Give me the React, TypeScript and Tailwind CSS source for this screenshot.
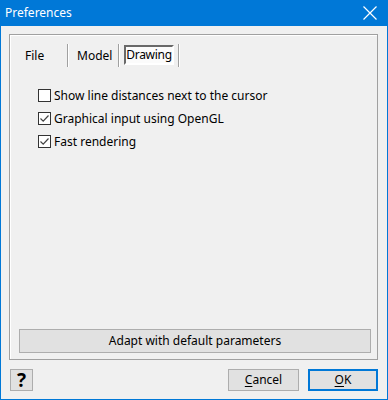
import React, { useState } from 'react';

const font = { fontFamily: '"Noto Sans", "Open Sans", sans-serif' };

function CheckRow({ label, checked }: { label: string; checked: boolean }) {
  return (
    <div className="flex h-[23px] items-center">
      <div className="flex h-[13px] w-[13px] items-center justify-center border border-[#333333] bg-white">
        {checked && (
          <svg width="11" height="11" viewBox="0 0 11 11">
            <path d="M1.5 5.5 L4.2 8.2 L9.5 2.5" fill="none" stroke="#444" strokeWidth="1.2" />
          </svg>
        )}
      </div>
      <span className="ml-[3px] text-[12px] text-black">{label}</span>
    </div>
  );
}

function Sep() {
  return <div className="h-[23px] w-[2px] border-l border-[#a0a0a0] bg-white" />;
}

export default function App() {
  const [tab] = useState('Drawing');

  return (
    <div className="flex h-[400px] w-[388px] flex-col bg-[#0078d7] px-px pb-px" style={font}>
      {/* title bar */}
      <div className="flex h-[26px] items-center justify-between pl-[4px] pr-[9px] text-white">
        <span className="text-[12px]">Preferences</span>
        <svg width="16" height="16" viewBox="0 0 16 16">
          <path d="M1.5 1.5 L14.5 14.5 M14.5 1.5 L1.5 14.5" stroke="white" strokeWidth="1.2" />
        </svg>
      </div>

      <div className="flex flex-1 flex-col bg-[#f0f0f0] pl-[8px] pr-[9px] pt-[8px]">
        {/* group box */}
        <div className="flex h-[326px] flex-col border border-[#a0a0a0] shadow-[inset_1px_1px_0_#ffffff]">
          <div className="mt-[9px] flex items-start">
            <div className="flex h-[23px] w-[57px] items-center pl-[15px] text-[12px] text-black">File</div>
            <Sep />
            <div className="flex h-[23px] w-[49px] items-center pl-[8px] text-[12px] text-black">Model</div>
            <Sep />
            <div className="ml-[4px] mr-[4px] mt-px flex h-[20px] w-[50px] items-center justify-center border-2 border-b-white border-l-[#696969] border-r-white border-t-[#696969] bg-[#fbfbfb] text-[12px] tracking-[-0.3px] text-black">
              {tab}
            </div>
            <Sep />
          </div>

          <div className="ml-[28px] mt-[17px] flex flex-col">
            <CheckRow label="Show line distances next to the cursor" checked={false} />
            <CheckRow label="Graphical input using OpenGL" checked />
            <CheckRow label="Fast rendering" checked />
          </div>

          <div className="flex-1" />
          <button className="mb-[6px] ml-[9px] mr-[6px] h-[24px] border border-[#adadad] bg-[#e1e1e1] text-[12px] text-black">
            Adapt with default parameters
          </button>
        </div>

        {/* bottom buttons */}
        <div className="mt-[9px] flex items-start">
          <button className="ml-px flex h-[22px] w-[23px] items-center justify-center border border-[#adadad] bg-[#e1e1e1] text-[19px] font-bold text-black">
            ?
          </button>
          <div className="flex-1" />
          <button className="h-[22px] w-[71px] border border-[#adadad] bg-[#e1e1e1] text-[12px] text-black">
            <span className="underline underline-offset-2">C</span>ancel
          </button>
          <button className="ml-[9px] h-[22px] w-[70px] border-2 border-[#0078d7] bg-[#e1e1e1] text-[12px] text-black">
            <span className="underline underline-offset-2">O</span>K
          </button>
        </div>
      </div>
    </div>
  );
}
